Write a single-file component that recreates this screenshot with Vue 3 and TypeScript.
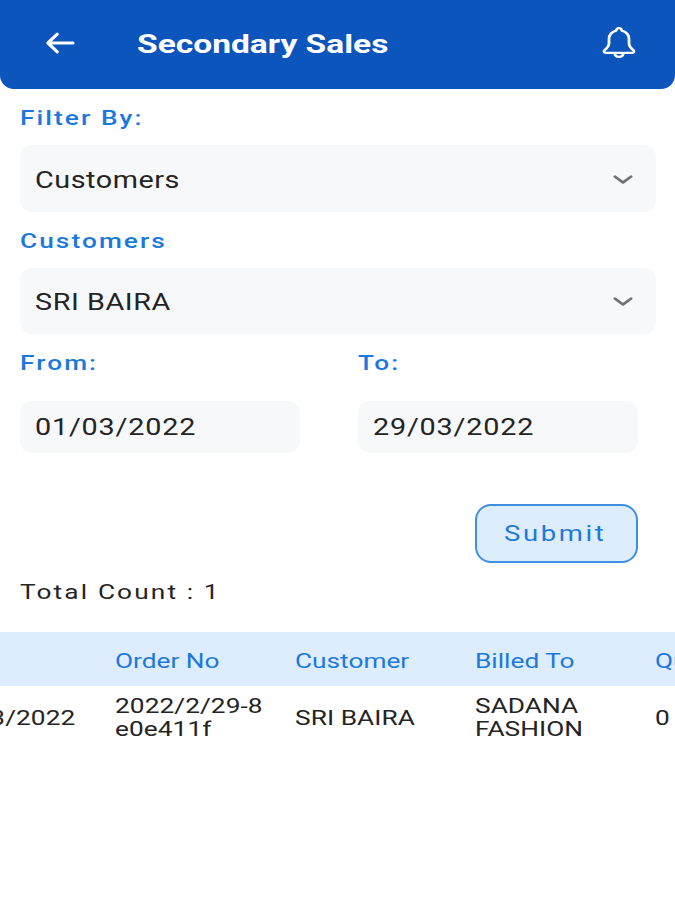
<script setup lang="ts">
const columns: { head: string; lines: string[] }[] = [
  { head: '', lines: ['01/03/2022'] },
  { head: 'Order No', lines: ['2022/2/29-8', 'e0e411f'] },
  { head: 'Customer', lines: ['SRI BAIRA'] },
  { head: 'Billed To', lines: ['SADANA', 'FASHION'] },
  { head: 'Quantity', lines: ['0'] },
]
</script>

<template>
  <div class="page">
    <header class="bar">
      <svg class="back" width="34" height="26" viewBox="0 0 34 28" fill="none" stroke="#fff" stroke-width="3.4" stroke-linecap="round" stroke-linejoin="round">
        <path d="M31 14H4M14 4.5 4 14l10 9.5" />
      </svg>
      <h1 class="title"><span class="wide title-text">Secondary Sales</span></h1>
      <svg class="bell" width="36" height="33" viewBox="0 0 36 40" preserveAspectRatio="none" fill="none" stroke="#fff" stroke-width="2.8" stroke-linecap="round" stroke-linejoin="round">
        <path d="M18 2.5c-1.800 0-2.600 1.200-2.800 3C10.500 7 8 11 8 16v5c0 3.500-2 6-4.500 8.500-1 1-.5 3 1.300 3h26.400c1.800 0 2.300-2 1.300-3C29.900 27 28 24.500 28 21v-5c0-5-2.500-9-7.200-10.500-.2-1.800-1-3-2.800-3Z" />
        <path d="M13.500 33c.3 2.800 2.200 4.500 4.500 4.500s4.200-1.700 4.500-4.500" />
      </svg>
    </header>

    <section class="form">
      <div class="label filter-label"><span class="wide">Filter By:</span></div>
      <div class="select">
        <span class="wide">Customers</span>
        <svg width="20" height="10" viewBox="0 0 20 12" preserveAspectRatio="none" fill="none" stroke="#6f7276" stroke-width="3" stroke-linecap="round" stroke-linejoin="round"><path d="m2 2 8 7 8-7" /></svg>
      </div>

      <div class="label customers-label"><span class="wide">Customers</span></div>
      <div class="select second">
        <span class="wide">SRI BAIRA</span>
        <svg width="20" height="10" viewBox="0 0 20 12" preserveAspectRatio="none" fill="none" stroke="#6f7276" stroke-width="3" stroke-linecap="round" stroke-linejoin="round"><path d="m2 2 8 7 8-7" /></svg>
      </div>

      <div class="dates">
        <div class="date-col">
          <div class="label"><span class="wide">From:</span></div>
          <div class="date"><span class="wide">01/03/2022</span></div>
        </div>
        <div class="date-col">
          <div class="label"><span class="wide">To:</span></div>
          <div class="date"><span class="wide">29/03/2022</span></div>
        </div>
      </div>

      <div class="actions">
        <button class="submit" type="button"><span class="wide">Submit</span></button>
      </div>

      <div class="count"><span class="wide">Total Count : 1</span></div>
    </section>

    <section class="table-clip">
      <div class="table">
        <div v-for="col in columns" :key="col.head" class="col">
          <div class="th"><span class="wide">{{ col.head }}</span></div>
          <div class="td">
            <span v-for="line in col.lines" :key="line" class="wide">{{ line }}</span>
          </div>
        </div>
      </div>
    </section>
  </div>
</template>

<style>
html, body { margin: 0; background: #fff; }
</style>

<style scoped>
.page {
  width: 675px;
  height: 900px;
  overflow: hidden;
  background: #fff;
  font-family: Roboto, "Liberation Sans", sans-serif;
  color: #242424;
}
.wide {
  display: inline-block;
  transform: scaleX(1.25);
  transform-origin: left center;
  white-space: nowrap;
}
.bar {
  height: 89px;
  box-sizing: border-box;
  padding: 0 38px 3px 43px;
  display: flex;
  align-items: center;
  background: #0b55bd;
  border-radius: 0 0 14px 14px;
}
.back { flex: none; }
.title {
  flex: 1;
  margin: 2px 0 0 60px;
  color: #fff;
  font-size: 26px;
  font-weight: 700;
  line-height: 32px;
}
.title-text { transform: scaleX(1.29); }
.bell { flex: none; margin-top: -2px; }
.form {
  padding: 0 20px;
}
.label {
  color: #1b79dd;
  font-size: 21px;
  font-weight: 500;
  line-height: 26px;
  letter-spacing: 1.65px;
}
.filter-label { padding-top: 16px; height: 40px; box-sizing: border-box; margin-bottom: 16px; }
.customers-label { margin-top: 16px; margin-bottom: 14px; }
.select {
  width: 636px;
  height: 67px;
  box-sizing: border-box;
  padding: 3px 23px 0 15px;
  display: flex;
  align-items: center;
  justify-content: space-between;
  background: #f6f8fa;
  border-radius: 12px;
  font-size: 23px;
  letter-spacing: 0.45px;
}
.second { height: 66px; padding-top: 2px; }
.dates {
  display: flex;
  gap: 58px;
  margin-top: 16px;
}
.date-col { width: 280px; }
.date {
  margin-top: 25px;
  height: 52px;
  display: flex;
  align-items: center;
  padding-left: 15px;
  box-sizing: border-box;
  background: #f6f8fa;
  border-radius: 12px;
  font-size: 23px;
  letter-spacing: 0.65px;
}
.actions {
  display: flex;
  justify-content: flex-end;
  width: 618px;
  margin-top: 51px;
}
.submit {
  width: 163px;
  height: 59px;
  padding: 0 24px 0 0;
  background: #deedfd;
  border: 2px solid #3d8fe4;
  border-radius: 16px;
  color: #1b79dd;
  font-family: inherit;
  font-size: 22px;
  letter-spacing: 2.1px;
}
.count {
  margin-top: 15px;
  font-size: 21px;
  line-height: 28px;
  letter-spacing: 1.7px;
}
.table-clip {
  margin-top: 26px;
  overflow: hidden;
}
.table {
  display: flex;
  width: 900px;
  margin-left: -65px;
}
.col { width: 180px; flex: none; }
.th {
  height: 54px;
  box-sizing: border-box;
  padding-top: 3px;
  display: flex;
  align-items: center;
  background: #deedfd;
  color: #1b79dd;
  font-size: 21px;
  letter-spacing: 0;
}
.td {
  height: 64px;
  display: flex;
  flex-direction: column;
  justify-content: center;
  align-items: flex-start;
  font-size: 21px;
  line-height: 23px;
  letter-spacing: 0.05px;
}
</style>
